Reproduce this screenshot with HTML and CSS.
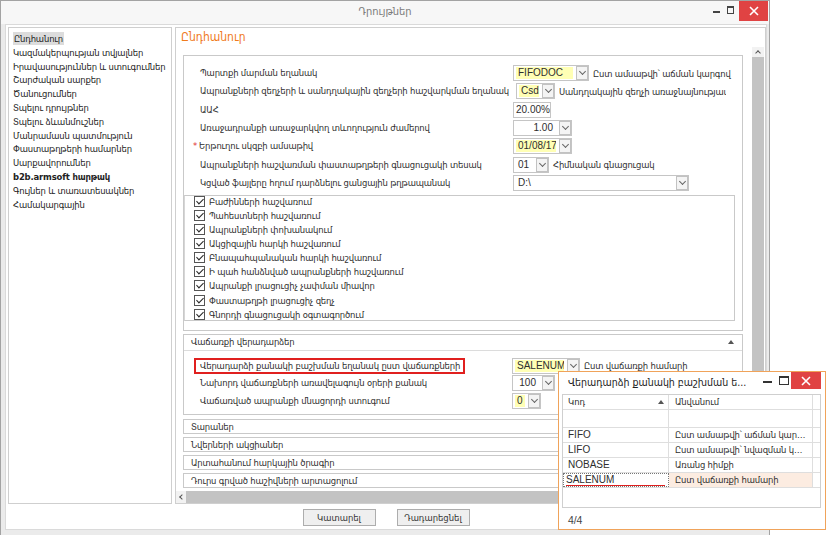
FILE: index.html
```html
<!DOCTYPE html>
<html lang="hy">
<head>
    <meta charset="UTF-8">
    <title>Դրույթներ</title>
    <link rel="stylesheet" href="styles.css">
</head>
<body>
<div class="window">
    <div class="titlebar">
        <span></span>
        <span class="title">Դրույթներ</span>
        <div class="controls">
            <span class="ctl-min"></span>
            <span class="ctl-max"></span>
            <span class="ctl-close"><svg width="10" height="10" viewBox="0 0 10 10"><path d="M1 1L9 9M9 1L1 9" stroke="#fff" stroke-width="1.6"/></svg></span>
        </div>
    </div>
    <div class="client">
        <div class="main">
            <ul class="nav">
                <li><span class="active">Ընդհանուր</span></li>
                <li>Կազմակերպության տվյալներ</li>
                <li>Իրավասություններ և ստուգումներ</li>
                <li>Շարժական սարքեր</li>
                <li>Ծանուցումներ</li>
                <li>Տպելու դրույթներ</li>
                <li>Տպելու ձևանմուշներ</li>
                <li>Մանրամասն պատմություն</li>
                <li>Փաստաթղթերի համարներ</li>
                <li>Սարքավորումներ</li>
                <li class="bold">b2b.armsoft հարթակ</li>
                <li>Գույներ և տառատեսակներ</li>
                <li>Համակարգային</li>
            </ul>
            <div class="content">
                <div class="content-title">Ընդհանուր</div>
                <div class="content-body">
                    <div class="scroll-area">
                        <div class="section general">
                            <div class="form">
                                <div class="label">Պարտքի մարման եղանակ</div>
                                <div class="cell">
                                    <span class="field w76"><span class="val hl">FIFODOC</span><span class="dd"></span></span>
                                    <span class="note">Ըստ ամսաթվի՝ աճման կարգով</span>
                                </div>
                                <div class="label">Ապրանքների զեղչերի և սանդղակային զեղչերի հաշվարկման եղանակ</div>
                                <div class="cell">
                                    <span class="field w39 shift"><span class="val hl">Csd</span><span class="dd"></span></span>
                                    <span class="note clip">Սանդղակային զեղչի առաջնայնությամբ</span>
                                </div>
                                <div class="label">ԱԱՀ</div>
                                <div class="cell">
                                    <span class="field w38 plain"><span class="val">20.00%</span></span>
                                </div>
                                <div class="label">Առաջադրանքի առաջարկվող տևողություն ժամերով</div>
                                <div class="cell">
                                    <span class="field w59"><span class="val num">1.00</span><span class="dd"></span></span>
                                </div>
                                <div class="label"><span class="req">*</span>Երթուղու սկզբի ամսաթիվ</div>
                                <div class="cell">
                                    <span class="field w59"><span class="val hl">01/08/17</span><span class="dd"></span></span>
                                </div>
                                <div class="label">Ապրանքների հաշվառման փաստաթղթերի գնացուցակի տեսակ</div>
                                <div class="cell">
                                    <span class="field w36"><span class="val">01</span><span class="dd"></span></span>
                                    <span class="note">Հիմնական գնացուցակ</span>
                                </div>
                                <div class="label">Կցված ֆայլերը հղում դարձնելու ցանցային թղթապանակ</div>
                                <div class="cell">
                                    <span class="field w176"><span class="val">D:\</span><span class="dd"></span></span>
                                </div>
                            </div>
                            <ul class="checks">
                                <li><span class="cb"></span>Բաժինների հաշվառում</li>
                                <li><span class="cb"></span>Պահեստների հաշվառում</li>
                                <li><span class="cb"></span>Ապրանքների փոխանակում</li>
                                <li><span class="cb"></span>Ակցիզային հարկի հաշվառում</li>
                                <li><span class="cb"></span>Բնապահպանական հարկի հաշվառում</li>
                                <li><span class="cb"></span>Ի պահ հանձնված ապրանքների հաշվառում</li>
                                <li><span class="cb"></span>Ապրանքի լրացուցիչ չափման միավոր</li>
                                <li><span class="cb"></span>Փաստաթղթի լրացուցիչ զեղչ</li>
                                <li><span class="cb"></span>Գնորդի գնացուցակի օգտագործում</li>
                            </ul>
                        </div>

                        <div class="section returns">
                            <div class="section-head">Վաճառքի վերադարձեր<span class="tri-up"></span></div>
                            <div class="form form-returns">
                                <div class="label"><span class="marked">Վերադարձի քանակի բաշխման եղանակ ըստ վաճառքների</span></div>
                                <div class="cell">
                                    <span class="field w68"><span class="val hl">SALENUM</span><span class="dd"></span></span>
                                    <span class="note">Ըստ վաճառքի համարի</span>
                                </div>
                                <div class="label">Նախորդ վաճառքների առավելագույն օրերի քանակ</div>
                                <div class="cell">
                                    <span class="field w43"><span class="val num">100</span><span class="dd"></span></span>
                                </div>
                                <div class="label">Վաճառված ապրանքի մնացորդի ստուգում</div>
                                <div class="cell">
                                    <span class="field w29"><span class="val hl">0</span><span class="dd"></span></span>
                                </div>
                            </div>
                        </div>

                        <div class="section collapsed">Տարաներ</div>
                        <div class="section collapsed">Նվերների ակցիաներ</div>
                        <div class="section collapsed">Արտահանում հարկային ծրագիր</div>
                        <div class="section collapsed">Դուրս գրված հաշիվների արտացոլում</div>
                    </div>
                    <div class="vscroll">
                        <span class="arrow"><span class="caret-up"></span></span>
                        <span class="thumb"></span>
                    </div>
                </div>
                <div class="hscroll">
                    <span class="arrow"><span class="caret-left"></span></span>
                    <span class="thumb"></span>
                </div>
            </div>
        </div>
        <div class="footer">
            <button>Կատարել</button>
            <button>Դադարեցնել</button>
        </div>
    </div>
</div>

<div class="popup">
    <div class="popup-title">
        <span class="popup-caption">Վերադարձի քանակի բաշխման ե...</span>
        <span class="ctl-min"></span>
        <span class="ctl-max"></span>
        <span class="ctl-close"><svg width="10" height="10" viewBox="0 0 10 10"><path d="M1 1L9 9M9 1L1 9" stroke="#fff" stroke-width="1.6"/></svg></span>
    </div>
    <div class="grid">
        <div class="row head">
            <span class="c1">Կոդ<span class="sort"></span></span>
            <span class="c2">Անվանում</span>
            <span class="c3"></span>
        </div>
        <div class="row filter">
            <span class="c1"></span><span class="c2"></span><span class="c3"></span>
        </div>
        <div class="row">
            <span class="c1">FIFO</span><span class="c2">Ըստ ամսաթվի՝ աճման կարգով</span><span class="c3"></span>
        </div>
        <div class="row">
            <span class="c1">LIFO</span><span class="c2">Ըստ ամսաթվի՝ նվազման կարգով</span><span class="c3"></span>
        </div>
        <div class="row">
            <span class="c1">NOBASE</span><span class="c2">Առանց հիմքի</span><span class="c3"></span>
        </div>
        <div class="row selected">
            <span class="c1"><span class="underline">SALENUM</span></span><span class="c2">Ըստ վաճառքի համարի</span><span class="c3"></span>
        </div>
    </div>
    <div class="popup-foot">4/4</div>
</div>
</body>
</html>
```

FILE: styles.css
```css
* {
    box-sizing: border-box;
}
body {
    margin: 0;
    width: 827px;
    height: 535px;
    overflow: hidden;
    position: relative;
    background-color: #fff;
    font-family: "DejaVu Sans Condensed", "DejaVu Sans", sans-serif;
    font-stretch: condensed;
    font-size: 9.4px;
    letter-spacing: -0.15px;
    color: #2e2e2e;
}
ul {
    list-style: none;
    margin: 0;
    padding: 0;
}

/* main window */
.window {
    width: 770px;
    height: 535px;
    border: 1px solid #a3a3a3;
    border-bottom: none;
    background-color: #ebebeb;
    display: flex;
    flex-direction: column;
}
.titlebar {
    height: 23px;
    flex-shrink: 0;
    background-color: #f7f7f7;
    display: grid;
    grid-template-columns: 1fr auto 1fr;
}
.title {
    color: #7b7b7b;
    font-size: 11px;
    letter-spacing: 0;
    line-height: 22px;
}
.controls {
    display: flex;
    justify-content: flex-end;
    align-items: flex-start;
    padding-right: 1px;
}
.ctl-min {
    width: 7px;
    height: 2px;
    flex-shrink: 0;
    background-color: #444;
    margin: 10px 7px 0 0;
}
.ctl-max {
    width: 7px;
    height: 8px;
    flex-shrink: 0;
    border: 1px solid #444;
    border-top-width: 2px;
    margin: 5px 5px 0 0;
}
.ctl-close {
    width: 29px;
    height: 20px;
    flex-shrink: 0;
    background-color: #e04343;
    display: flex;
    align-items: center;
    justify-content: center;
}
.client {
    flex: 1;
    margin: 0 2px 5px 4px;
    background-color: #fff;
    border: 1px solid #dadada;
    display: flex;
    flex-direction: column;
}
.main {
    height: 479px;
    padding: 2px 0 0 2px;
    display: flex;
}

/* left navigation */
.nav {
    width: 164px;
    border: 1px solid #cfcfcf;
    padding: 4px 0 0 4px;
    color: #222;
    overflow: hidden;
}
.nav li {
    height: 13.8px;
    line-height: 13.8px;
    white-space: nowrap;
}
.nav .active {
    background-color: #dcdcdc;
    padding: 1px 1px;
}
.nav .bold {
    font-weight: bold;
}

/* right content */
.content {
    flex: 1;
    margin-left: 3px;
    border: 1px solid #cfcfcf;
    display: flex;
    flex-direction: column;
    min-width: 0;
}
.content-title {
    height: 19px;
    padding: 2px 0 0 5px;
    color: #f07b1d;
    font-size: 12px;
    letter-spacing: 0;
}
.content-body {
    height: 444px;
    display: flex;
}
.scroll-area {
    flex: 1;
    overflow: hidden;
    padding: 8px 0 0 7px;
}
.vscroll {
    width: 12px;
    margin-right: 1px;
    display: flex;
    flex-direction: column;
}
.vscroll .arrow {
    height: 10px;
    background-color: #f2f2f2;
    display: flex;
    align-items: center;
    justify-content: center;
}
.vscroll .thumb {
    flex: 1;
    background-color: #c3c3c3;
}
.caret-up {
    width: 4px;
    height: 4px;
    border-left: 1px solid #555;
    border-top: 1px solid #555;
    transform: rotate(45deg);
    margin-top: 2px;
}
.hscroll {
    height: 12px;
    display: flex;
    background-color: #c3c3c3;
}
.hscroll .arrow {
    width: 10px;
    background-color: #f2f2f2;
    display: flex;
    align-items: center;
    justify-content: center;
}
.caret-left {
    width: 4px;
    height: 4px;
    border-left: 1px solid #555;
    border-bottom: 1px solid #555;
    transform: rotate(45deg);
    margin-left: 2px;
}

/* sections */
.section {
    width: 560px;
    border: 1px solid #c9c9c9;
}
.general {
    padding: 9px 0 9px 0;
}
.form {
    display: grid;
    grid-template-columns: 329px 1fr;
    grid-auto-rows: 16px;
    row-gap: 2.33px;
}
.label {
    padding-left: 16px;
    line-height: 16px;
    white-space: nowrap;
    overflow: hidden;
}
.req {
    color: #e03030;
    margin-left: -7px;
    margin-right: 2px;
}
.cell {
    display: flex;
    align-items: center;
    white-space: nowrap;
}
.field {
    height: 16px;
    border: 1px solid #c5c5c5;
    background-color: #fff;
    display: flex;
    align-items: center;
    padding: 0 0 0 2px;
    gap: 3px;
    flex-shrink: 0;
}
.field.shift {
    margin-left: 3px;
}
.field.plain {
    padding-left: 0;
}
.val {
    flex: 1;
    min-width: 0;
    height: 12px;
    line-height: 12px;
    padding-left: 2px;
    font-family: "Liberation Sans", "DejaVu Sans", sans-serif;
    font-stretch: normal;
    font-size: 10px;
    letter-spacing: 0;
    white-space: nowrap;
    overflow: hidden;
}
.val.hl {
    background-color: #ffffb5;
}
.val.num {
    text-align: right;
    padding-right: 3px;
}
.dd {
    width: 12px;
    height: 14px;
    flex-shrink: 0;
    margin-left: auto;
    border: 1px solid #c2c2c2;
    background-color: #f4f4f4;
    display: flex;
    align-items: center;
    justify-content: center;
}
.dd::after {
    content: "";
    width: 4px;
    height: 4px;
    border-right: 1px solid #666;
    border-bottom: 1px solid #666;
    transform: rotate(45deg);
    margin-top: -3px;
}
.note {
    margin-left: 4px;
}
.note.clip {
    width: 167px;
    overflow: hidden;
}
.w29 { width: 29px; }
.w36 { width: 36px; }
.w38 { width: 38px; }
.w39 { width: 39px; }
.w43 { width: 43px; }
.w59 { width: 59px; }
.w68 { width: 68px; }
.w76 { width: 76px; }
.w176 { width: 176px; }

.checks {
    height: 126px;
    margin: 4px 7px 0 0;
    border: 1px solid #c9c9c9;
    border-left-color: #d6d6d6;
    padding: 0 0 0 9px;
}
.checks li {
    height: 14.15px;
    display: flex;
    align-items: center;
    gap: 4px;
}
.checks li:first-child {
    margin-top: -2px;
}
.cb {
    width: 11px;
    height: 11px;
    border: 1px solid #555;
    background-color: #fff;
    position: relative;
    flex-shrink: 0;
}
.cb::after {
    content: "";
    position: absolute;
    left: 3px;
    top: 0;
    width: 3px;
    height: 6px;
    border: solid #222;
    border-width: 0 1.5px 1.5px 0;
    transform: rotate(45deg);
}

.returns {
    margin-top: 3px;
    padding-bottom: 5px;
}
.section-head {
    height: 16px;
    line-height: 14px;
    padding: 0 8px 0 7px;
    border-bottom: 1px solid #dcdcdc;
    display: flex;
    justify-content: space-between;
    align-items: center;
}
.tri-up {
    width: 0;
    height: 0;
    border-left: 3px solid transparent;
    border-right: 3px solid transparent;
    border-bottom: 4px solid #555;
}
.form-returns {
    grid-template-columns: 328px 1fr;
    row-gap: 1.5px;
    margin-top: 7px;
}
.marked {
    display: inline-block;
    height: 16px;
    line-height: 12px;
    margin-left: -6px;
    padding: 0 3px 0 4px;
    border: 2px solid #e0201f;
}
.collapsed {
    height: 15px;
    line-height: 13px;
    margin-top: 3px;
    padding-left: 7px;
}
.returns + .collapsed {
    margin-top: 4px;
}

/* footer buttons */
.footer {
    flex: 1;
    display: flex;
    justify-content: center;
    gap: 21px;
    padding-top: 5px;
}
.footer button {
    width: 73px;
    height: 17px;
    padding: 0;
    border: 1px solid #adadad;
    background-color: #efefef;
    font-family: "DejaVu Sans Condensed", "DejaVu Sans", sans-serif;
    font-stretch: condensed;
    font-size: 9.4px;
    color: #333;
}

/* lookup popup */
.popup {
    position: absolute;
    left: 558px;
    top: 371px;
    width: 268px;
    height: 159px;
    border: 1px solid #f0a35a;
    background-color: #fff;
    display: flex;
    flex-direction: column;
}
.popup-title {
    height: 20px;
    display: flex;
    align-items: flex-start;
    padding-right: 4px;
}
.popup-caption {
    flex: 1;
    min-width: 0;
    padding: 4px 0 0 9px;
    font-size: 10.5px;
    letter-spacing: 0;
    color: #222;
    white-space: nowrap;
    overflow: hidden;
}
.popup-title .ctl-min {
    width: 9px;
    margin: 9px 7px 0 0;
    background-color: #333;
}
.popup-title .ctl-max {
    width: 10px;
    height: 9px;
    margin: 4px 2px 0 0;
    border-color: #333;
}
.popup-title .ctl-close {
    width: 30px;
    height: 17px;
}
.grid {
    height: 114px;
    margin: 2px 4px 0 3px;
    border: 1px solid #cfcfcf;
}
.row {
    display: flex;
    height: 15px;
    border-bottom: 1px solid #dedede;
}
.row.filter {
    height: 18px;
}
.row span {
    line-height: 14px;
    white-space: nowrap;
    overflow: hidden;
    text-overflow: ellipsis;
}
.c1 {
    width: 106px;
    padding-left: 5px;
    border-right: 1px solid #dedede;
    font-family: "Liberation Sans", "DejaVu Sans", sans-serif;
    font-stretch: normal;
    font-size: 10px;
    letter-spacing: 0;
    display: flex;
    justify-content: space-between;
    align-items: center;
}
.c2 {
    width: 144px;
    padding: 0 2px 0 6px;
    border-right: 1px solid #dedede;
}
.c3 {
    flex: 1;
}
.row.head .c1 {
    font-family: "DejaVu Sans Condensed", "DejaVu Sans", sans-serif;
    font-stretch: condensed;
    font-size: 9.4px;
}
.sort {
    width: 0;
    height: 0;
    margin-right: 4px;
    border-left: 3px solid transparent;
    border-right: 3px solid transparent;
    border-bottom: 4px solid #555;
}
.row.selected .c1 {
    border: 1px dotted #777;
    padding-left: 2px;
    padding-right: 3px;
}
.underline {
    width: 100%;
    border-bottom: 2px solid #e0201f;
    line-height: 11px !important;
}
.row.selected .c2 {
    background-color: #fcece1;
}
.popup-foot {
    padding: 6px 0 0 9px;
    font-family: "Liberation Sans", sans-serif;
    font-size: 10.5px;
    color: #444;
}
```
